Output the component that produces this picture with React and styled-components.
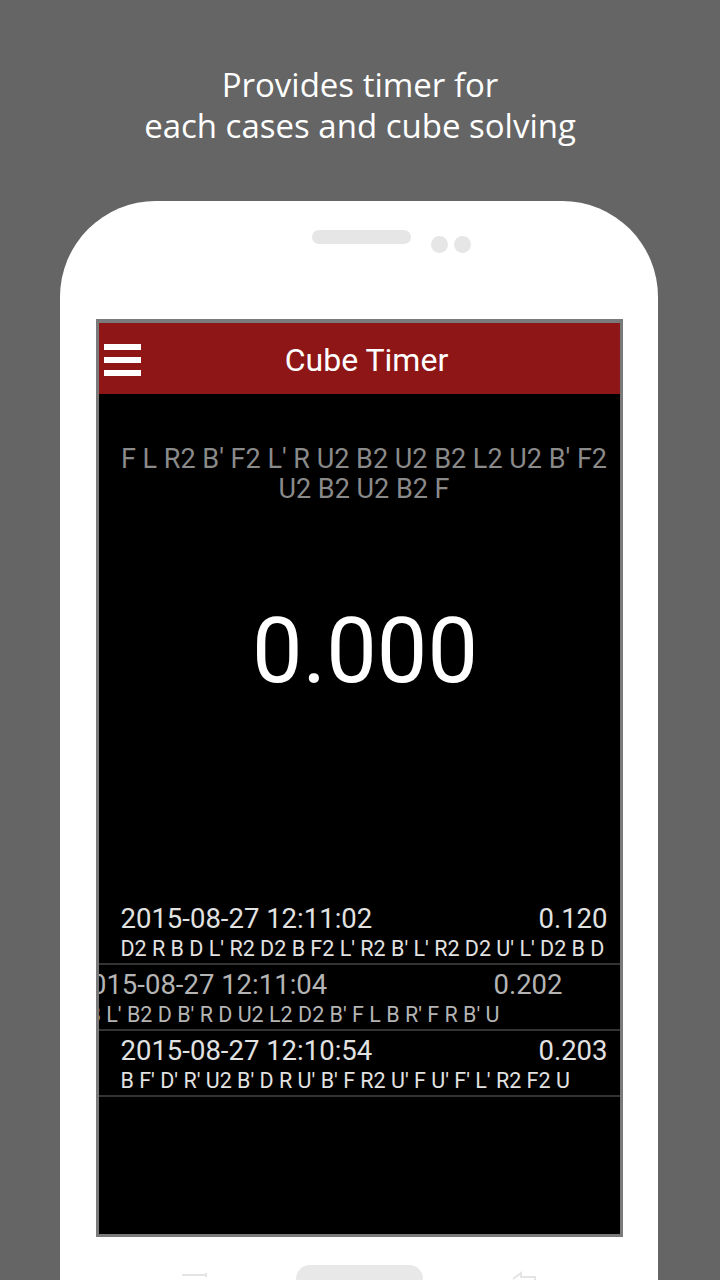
import React from "react";
import styled, { createGlobalStyle } from "styled-components";

const GlobalStyle = createGlobalStyle`
  html, body {
    margin: 0;
    padding: 0;
    background: #656565;
  }
  body {
    font-family: Roboto, "Liberation Sans", sans-serif;
  }
`;

const solves = [
  {
    date: "2015-08-27 12:11:02",
    time: "0.120",
    scramble: "D2 R B D L' R2 D2 B F2 L' R2 B' L' R2 D2 U' L' D2 B D",
  },
  {
    date: "2015-08-27 12:11:04",
    time: "0.202",
    scramble: "B L' B2 D B' R D U2 L2 D2 B' F L B R' F R B' U",
    swiped: true,
  },
  {
    date: "2015-08-27 12:10:54",
    time: "0.203",
    scramble: "B F' D' R' U2 B' D R U' B' F R2 U' F U' F' L' R2 F2 U",
  },
];

export default function App() {
  return (
    <Page>
      <GlobalStyle />
      <Caption>
        Provides timer for
        <br />
        each cases and cube solving
      </Caption>
      <Phone>
        <Sensors>
          <Speaker />
          <Camera />
          <Camera />
        </Sensors>
        <Screen>
          <AppBar>
            <MenuButton>
              <span />
              <span />
              <span />
            </MenuButton>
            <Title>Cube Timer</Title>
          </AppBar>
          <Scramble>
            F L R2 B' F2 L' R U2 B2 U2 B2 L2 U2 B' F2 U2 B2 U2 B2 F
          </Scramble>
          <Timer>0.000</Timer>
          <SolveList>
            {solves.map((s) => (
              <SolveRow key={s.date}>
                <SolveContent $swiped={s.swiped}>
                  <SolveTop>
                    <span>{s.date}</span>
                    <span>{s.time}</span>
                  </SolveTop>
                  <SolveScramble $swiped={s.swiped}>{s.scramble}</SolveScramble>
                </SolveContent>
              </SolveRow>
            ))}
          </SolveList>
        </Screen>
        <NavKeys>
          <svg width="36" height="14" viewBox="0 0 36 14">
            <path d="M4 4 H28 M4 10 H28" stroke="#e4e4e4" strokeWidth="2" fill="none" />
            <path d="M28 2 V6" stroke="#e4e4e4" strokeWidth="2" />
          </svg>
          <HomeKey />
          <svg width="36" height="14" viewBox="0 0 36 14">
            <path d="M8 8 L16 2 L16 6 H30 V14" stroke="#e4e4e4" strokeWidth="2" fill="none" />
          </svg>
        </NavKeys>
      </Phone>
    </Page>
  );
}

const Page = styled.div`
  width: 720px;
  height: 1280px;
  overflow: hidden;
  display: flex;
  flex-direction: column;
  align-items: center;
`;

const Caption = styled.div`
  flex-shrink: 0;
  margin-top: 64px;
  height: 137px;
  font-family: "Open Sans", "Noto Sans", sans-serif;
  font-size: 33px;
  line-height: 41px;
  color: #ffffff;
  text-align: center;
`;

const Phone = styled.div`
  width: 598px;
  flex-shrink: 0;
  margin-right: 2px;
  background: #ffffff;
  border-radius: 96px 96px 0 0;
  display: flex;
  flex-direction: column;
  align-items: center;
  padding-bottom: 40px;
`;

const Sensors = styled.div`
  display: flex;
  align-items: flex-end;
  gap: 6px;
  padding-top: 29px;
  height: 52px;
  box-sizing: border-box;
  margin-left: 64px;
`;

const Speaker = styled.div`
  width: 99px;
  height: 14px;
  border-radius: 7px;
  background: #e6e6e6;
  margin-right: 14px;
  align-self: flex-start;
`;

const Camera = styled.div`
  width: 17px;
  height: 17px;
  border-radius: 50%;
  background: #e6e6e6;
`;

const Screen = styled.div`
  margin-top: 66px;
  width: 527px;
  height: 918px;
  box-sizing: border-box;
  border: 3px solid #7a7a7a;
  border-top-width: 4px;
  background: #000000;
  overflow: hidden;
  display: flex;
  flex-direction: column;
`;

const AppBar = styled.div`
  height: 71px;
  flex-shrink: 0;
  background: #8e1616;
  display: flex;
  align-items: center;
`;

const MenuButton = styled.div`
  width: 37px;
  margin-left: 5px;
  display: flex;
  flex-direction: column;
  gap: 7px;
  margin-top: 3px;
  span {
    display: block;
    height: 6px;
    background: #ffffff;
  }
`;

const Title = styled.div`
  flex: 1;
  text-align: center;
  color: #ffffff;
  font-size: 32px;
  padding-right: 27px;
  margin-top: 2px;
`;

const Scramble = styled.div`
  padding: 50px 6px 0 16px;
  font-size: 27px;
  line-height: 30px;
  color: #8a8a8a;
  text-align: center;
`;

const Timer = styled.div`
  margin-top: 94px;
  padding-left: 12px;
  text-align: center;
  font-size: 90px;
  line-height: 108px;
  color: #ffffff;
`;

const SolveList = styled.div`
  margin-top: 193px;
  display: flex;
  flex-direction: column;
`;

const SolveRow = styled.div`
  height: 66px;
  flex-shrink: 0;
  box-sizing: border-box;
  border-bottom: 2px solid #333333;
  overflow: hidden;
`;

const SolveContent = styled.div`
  padding: 4px 12px 0 22px;
  transform: translateX(${(p) => (p.$swiped ? "-45px" : "0")});
  color: ${(p) => (p.$swiped ? "#b4b4b4" : "#e2e2e2")};
  white-space: nowrap;
`;

const SolveTop = styled.div`
  display: flex;
  justify-content: space-between;
  font-size: 27.5px;
  line-height: 32px;
`;

const SolveScramble = styled.div`
  font-size: 21.5px;
  line-height: 28px;
  margin-left: ${(p) => (p.$swiped ? "12px" : "0")};
`;

const NavKeys = styled.div`
  margin-top: 28px;
  display: flex;
  align-items: flex-start;
  gap: 82px;
  svg {
    margin-top: 6px;
  }
`;

const HomeKey = styled.div`
  width: 127px;
  height: 40px;
  border-radius: 14px;
  background: #e8e8e8;
`;
